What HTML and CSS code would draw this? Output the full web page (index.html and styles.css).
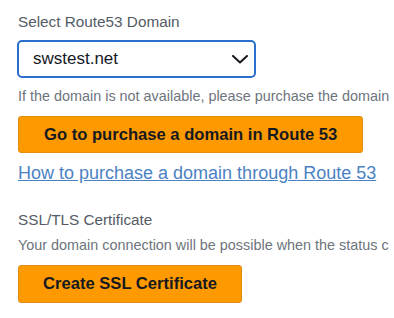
FILE: index.html
```html
<!DOCTYPE html>
<html>
<head>
    <title>Domain settings</title>
    <link rel="stylesheet" href="styles.css">
</head>
<body>
    <div class="field">
        <div class="field-label">Select Route53 Domain</div>
        <div class="select-box">
            <span class="select-value">swstest.net</span>
            <svg class="chevron" width="16" height="9" viewBox="0 0 16 9">
                <polyline points="1,1 8,7.5 15,1" fill="none" stroke="#16191f" stroke-width="2" stroke-linecap="round" stroke-linejoin="round"/>
            </svg>
        </div>
        <div class="hint">If the domain is not available, please purchase the domain</div>
        <button class="btn-primary btn-purchase">Go to purchase a domain in Route 53</button>
        <a class="help-link" href="#">How to purchase a domain through Route 53</a>
    </div>

    <div class="field">
        <div class="field-label">SSL/TLS Certificate</div>
        <div class="hint hint-tight">Your domain connection will be possible when the status c</div>
        <button class="btn-primary btn-ssl">Create SSL Certificate</button>
    </div>
</body>
</html>
```

FILE: styles.css
```css
body {
    margin: 0;
    padding: 12px 0 0 18px;
    font-family: "Liberation Sans", Arial, sans-serif;
    overflow: hidden;
    background: #fff;
}
.field {
    display: flex;
    flex-direction: column;
    align-items: flex-start;
}
.field-label {
    font-size: 15.3px;
    line-height: 20px;
    color: #545b64;
}
.select-box {
    box-sizing: border-box;
    width: 239px;
    height: 38px;
    margin-top: 8px;
    margin-left: -1px;
    padding: 0 6px 0 14px;
    border: 2px solid #2a6fcb;
    border-radius: 5px;
    display: flex;
    align-items: center;
    justify-content: space-between;
}
.select-value {
    font-size: 17px;
    color: #16191f;
}
.hint {
    margin-top: 9px;
    font-size: 14.4px;
    line-height: 18px;
    color: #6d747c;
    white-space: nowrap;
}
.hint-tight {
    margin-top: 6px;
}
.btn-primary {
    box-sizing: border-box;
    height: 37px;
    padding: 0 25px;
    border: 1px solid #e08d10;
    border-radius: 3px;
    background: #ff9900;
    color: #16191f;
    font-family: "Liberation Sans", Arial, sans-serif;
    font-size: 16.6px;
    font-weight: bold;
}
.btn-purchase {
    margin-top: 11px;
}
.btn-ssl {
    height: 38px;
    padding: 0 24px;
    margin-top: 11px;
}
.help-link {
    margin-top: 9px;
    font-size: 18px;
    line-height: 22px;
    color: #4b82c3;
    white-space: nowrap;
}
.field + .field {
    margin-top: 26px;
}
```
